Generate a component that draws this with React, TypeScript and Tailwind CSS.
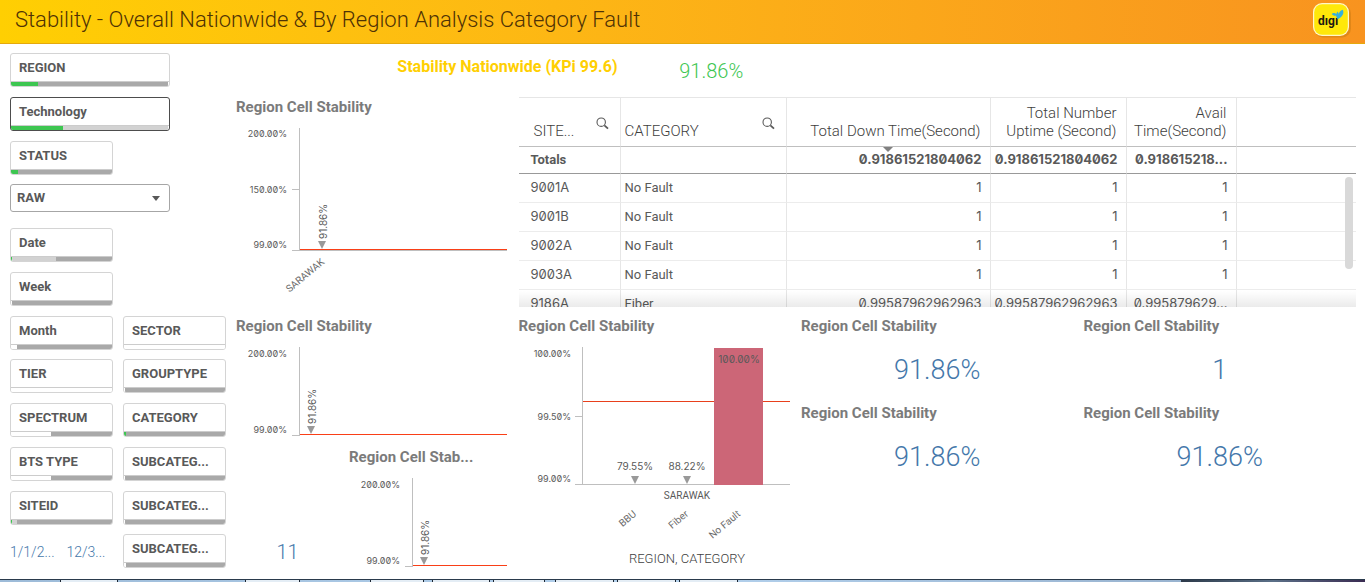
import type { ReactNode } from 'react';

interface Segment {
  color: string;
  width: number;
}

interface FilterDef {
  label: string;
  area: string;
  bar: Segment[];
  active?: boolean;
}

const GREEN = '#3dc651';
const LIGHT = '#d2d2d2';
const GREY = '#a9a9a9';
const WHITE = '#ffffff';

// bar widths are percentages: selected, alternative, possible, excluded
const filters: FilterDef[] = [
  { label: 'REGION', area: 'col-start-1 col-span-3 row-start-1', bar: [{ color: GREEN, width: 17 }, { color: GREY, width: 83 }] },
  { label: 'Technology', area: 'col-start-1 col-span-3 row-start-2', active: true, bar: [{ color: GREEN, width: 33 }, { color: LIGHT, width: 67 }] },
  { label: 'STATUS', area: 'col-start-1 col-span-2 row-start-3', bar: [{ color: GREEN, width: 7 }, { color: GREY, width: 93 }] },
  { label: 'Date', area: 'col-start-1 col-span-2 row-start-5', bar: [{ color: GREEN, width: 1 }, { color: LIGHT, width: 44 }, { color: GREY, width: 55 }] },
  { label: 'Week', area: 'col-start-1 col-span-2 row-start-6', bar: [{ color: WHITE, width: 1 }, { color: GREY, width: 99 }] },
  { label: 'Month', area: 'col-start-1 col-span-2 row-start-7', bar: [{ color: WHITE, width: 6 }, { color: GREY, width: 94 }] },
  { label: 'TIER', area: 'col-start-1 col-span-2 row-start-8', bar: [{ color: WHITE, width: 100 }] },
  { label: 'SPECTRUM', area: 'col-start-1 col-span-2 row-start-9', bar: [{ color: WHITE, width: 40 }, { color: GREY, width: 60 }] },
  { label: 'BTS TYPE', area: 'col-start-1 col-span-2 row-start-10', bar: [{ color: WHITE, width: 40 }, { color: GREY, width: 60 }] },
  { label: 'SITEID', area: 'col-start-1 col-span-2 row-start-11', bar: [{ color: GREEN, width: 1 }, { color: LIGHT, width: 5 }, { color: GREY, width: 94 }] },
  { label: 'SECTOR', area: 'col-start-3 col-span-2 row-start-7', bar: [{ color: WHITE, width: 100 }] },
  { label: 'GROUPTYPE', area: 'col-start-3 col-span-2 row-start-8', bar: [{ color: WHITE, width: 1 }, { color: GREY, width: 99 }] },
  { label: 'CATEGORY', area: 'col-start-3 col-span-2 row-start-9', bar: [{ color: GREEN, width: 2 }, { color: GREY, width: 98 }] },
  { label: 'SUBCATEG...', area: 'col-start-3 col-span-2 row-start-10', bar: [{ color: WHITE, width: 1 }, { color: GREY, width: 99 }] },
  { label: 'SUBCATEG...', area: 'col-start-3 col-span-2 row-start-11', bar: [{ color: WHITE, width: 1 }, { color: GREY, width: 99 }] },
  { label: 'SUBCATEG...', area: 'col-start-3 col-span-2 row-start-12', bar: [{ color: WHITE, width: 2 }, { color: GREY, width: 98 }] },
];

const rows = [
  ['9001A', 'No Fault', '1', '1', '1'],
  ['9001B', 'No Fault', '1', '1', '1'],
  ['9002A', 'No Fault', '1', '1', '1'],
  ['9003A', 'No Fault', '1', '1', '1'],
  ['9186A', 'Fiber', '0.99587962962963', '0.99587962962963', '0.995879629...'],
];

function Filter({ label, area, bar, active }: FilterDef) {
  return (
    <button
      type="button"
      className={`${area} flex flex-col h-[34px] overflow-hidden rounded-[3px] border bg-white text-left ${active ? 'border-[#4d4d4d]' : 'border-[#d4d4d4]'}`}
    >
      <span className="flex-1 pl-2 text-[13px] leading-[27px] font-bold text-[#595959]">{label}</span>
      <span className="flex h-[5px] w-full border-t border-[#cccccc]">
        {bar.map((s, i) => (
          <span key={i} style={{ width: `${s.width}%`, backgroundColor: s.color }} />
        ))}
      </span>
    </button>
  );
}

function Panel({ area, title = 'Region Cell Stability', children }: { area: string; title?: string; children: ReactNode }) {
  return (
    <section className={`${area} flex flex-col min-w-0`}>
      <h2 className="h-5 text-[15px] leading-5 font-bold text-[#7b7b7b] whitespace-nowrap">{title}</h2>
      {children}
    </section>
  );
}

function Kpi({ area, value }: { area: string; value: string }) {
  return (
    <Panel area={area}>
      <p className="pt-4 text-center text-[27px] leading-9 font-light text-[#4477aa]">{value}</p>
    </Panel>
  );
}

function Marker({ x, y }: { x: number; y: number }) {
  return <path d={`M${x - 4} ${y - 8}h8l-4 8z`} fill="#999999" />;
}

function AxisLabel({ x, y, children }: { x: number; y: number; children: ReactNode }) {
  return (
    <text x={x} y={y} textAnchor="end" className="fill-[#595959] text-[9px]">{children}</text>
  );
}

function LineChart({ height, ticks, markerX, category }: { height: number; ticks: [string, number][]; markerX: number; category?: string }) {
  return (
    <svg className="w-full overflow-visible pr-[2px] font-[Inter,sans-serif] slashed-zero" height={height + 20}>
      <g shapeRendering="crispEdges">
        <rect x="63" y="11" width="1" height={height - 11} fill="#bfbfbf" />
        <rect x="56" y={height - 1} width="7" height="1" fill="#bfbfbf" />
        {category && <rect x="56" y="72" width="7" height="1" fill="#bfbfbf" />}
        {category && <line x1="63" x2="100%" y1={height - 0.5} y2={height - 0.5} stroke="#bfbfbf" />}
        <line x1="64" x2="100%" y1={height - 1.5} y2={height - 1.5} stroke="#f93f17" />
      </g>
      {ticks.map(([label, y]) => <AxisLabel key={label} x={51} y={y}>{label}</AxisLabel>)}
      <Marker x={markerX} y={height - 2} />
      <text transform={`translate(${markerX + 5} ${height - 12}) rotate(-90)`} className="fill-[#595959] text-[10px]">91.86%</text>
      {category && (
        <text transform={`translate(${markerX + 3} ${height + 12}) rotate(-40)`} textAnchor="end" className="fill-[#6b6b6b] font-[Roboto,sans-serif] text-[10px]">{category}</text>
      )}
    </svg>
  );
}

function BarChart() {
  return (
    <svg className="w-full overflow-visible pr-[2px] font-[Inter,sans-serif] slashed-zero" height="240">
      <g shapeRendering="crispEdges">
        <rect x="63" y="11" width="1" height="138" fill="#bfbfbf" />
        <rect x="56" y="80" width="8" height="1" fill="#bfbfbf" />
        <line x1="56" x2="100%" y1="148.5" y2="148.5" stroke="#bfbfbf" />
        <line x1="64" x2="100%" y1="65.5" y2="65.5" stroke="#e8401c" />
        <rect x="195" y="12" width="49" height="137" fill="#cc6677" />
      </g>
      <AxisLabel x={52} y={21}>100.00%</AxisLabel>
      <AxisLabel x={52} y={84}>99.50%</AxisLabel>
      <AxisLabel x={52} y={146}>99.00%</AxisLabel>
      <g className="fill-[#595959] text-[10px]" textAnchor="middle">
        <text x="220" y="27">100.00%</text>
        <text x="116" y="134">79.55%</text>
        <text x="168" y="134">88.22%</text>
      </g>
      <Marker x={116} y={148} />
      <Marker x={168} y={148} />
      <g className="fill-[#6b6b6b] font-[Roboto,sans-serif] text-[10px]">
        <text x="168" y="163" textAnchor="middle" className="fill-[#595959]">SARAWAK</text>
        <g textAnchor="end">
          <text transform="translate(118 179) rotate(-40)">BBU</text>
          <text transform="translate(170 179) rotate(-40)">Fiber</text>
          <text transform="translate(222 179) rotate(-40)">No Fault</text>
        </g>
        <text x="168" y="227" textAnchor="middle" className="fill-[#404040] text-[13px] font-light">REGION, CATEGORY</text>
      </g>
    </svg>
  );
}

function SearchIcon() {
  return (
    <svg className="shrink-0" width="13" height="13" viewBox="0 0 13 13" fill="none" stroke="#595959" aria-hidden="true">
      <circle cx="5.2" cy="5.2" r="4.2" strokeWidth="1.1" />
      <path d="M8.4 8.4 12 11.6" strokeWidth="1.8" />
    </svg>
  );
}

function DigiLogo() {
  return (
    <svg width="38" height="36" viewBox="0 0 38 36" role="img" aria-label="digi">
      <rect x="1" y="2.5" width="37" height="33" rx="9" fill="#c97a12" opacity="0.5" />
      <rect x="0" y="1" width="36" height="33" rx="9" fill="#fff7c8" />
      <rect x="1.2" y="2.2" width="33.6" height="30.6" rx="8" fill="#ffe80a" />
      <text x="5" y="23" className="fill-[#1c1a12] font-[Roboto,sans-serif] text-[12px] font-bold">dıgı</text>
      <g fill="#35b1dd">
        <path d="M25 17.500c-2.400-2.600-2.600-5.600-.4-8.100 1.700 2.300 1.900 5.200.4 8.100z" />
        <path d="M25.200 17c-.4-4.200.8-8 4.600-9.200 1.700 3.400-.6 7.200-4.600 9.200z" />
        <path d="M24.500 13c-2.300-2.200-4.600-2.400-5.700-1.100 1.200 1.900 3.700 2.200 5.700 1.100z" />
      </g>
    </svg>
  );
}

function StabilityTable() {
  const num = 'font-[Inter,sans-serif] slashed-zero text-[13px]';
  return (
    <div className="relative col-start-10 col-span-15 row-start-2 row-span-5 h-[210px] overflow-hidden border-t border-[#e6e6e6]">
      <table className="w-full table-fixed border-separate border-spacing-0 text-[13px] text-[#595959]">
        <colgroup>
          <col className="w-[102px]" />
          <col className="w-[166px]" />
          <col className="w-[204px]" />
          <col className="w-[136px]" />
          <col className="w-[110px]" />
          <col />
        </colgroup>
        <thead className="text-[15px] leading-[18px] text-[#404040]">
          <tr className="h-[49px] align-bottom *:border-b *:border-[#bfbfbf] *:pb-[6px] *:font-light">
            <th className="border-r border-r-[#e6e6e6]! pl-[15px] pr-[11px] text-left">
              <span className="flex items-end justify-between"><span>SITE...</span><button type="button" aria-label="Search SITEID" className="pb-[10px]"><SearchIcon /></button></span>
            </th>
            <th className="border-r border-r-[#e6e6e6]! pl-1 pr-[11px] text-left">
              <span className="flex items-end justify-between"><span>CATEGORY</span><button type="button" aria-label="Search CATEGORY" className="pb-[10px]"><SearchIcon /></button></span>
            </th>
            <th className="relative border-r border-r-[#e6e6e6]! pr-[9px] text-right">
              Total Down Time(Second)
              <span className="absolute -bottom-[6px] left-1/2 -translate-x-1/2 border-x-[5px] border-t-[5px] border-x-transparent border-t-[#808080]" />
            </th>
            <th className="border-r border-r-[#e6e6e6]! pr-[9px] text-right">Total Number<br />Uptime (Second)</th>
            <th className="border-r border-r-[#e6e6e6]! pr-[9px] text-right">Avail<br />Time(Second)</th>
            <th />
          </tr>
        </thead>
        <tbody>
          <tr className="h-[27px] font-bold *:border-b *:border-[#999999]">
            <td className="border-r border-r-[#e6e6e6]! pl-3">Totals</td>
            <td className="border-r border-r-[#e6e6e6]!" />
            <td className={`${num} border-r border-r-[#e6e6e6]! pr-2 text-right`}>0.91861521804062</td>
            <td className={`${num} border-r border-r-[#e6e6e6]! pr-2 text-right`}>0.91861521804062</td>
            <td className={`${num} border-r border-r-[#e6e6e6]! pr-2 text-right`}>0.918615218...</td>
            <td />
          </tr>
          {rows.map(r => (
            <tr key={r[0]} className="h-[29px] *:border-b *:border-[#ececec]">
              <td className={`${num} border-r border-r-[#e6e6e6]! pl-3`}>{r[0]}</td>
              <td className="border-r border-r-[#e6e6e6]! pl-1">{r[1]}</td>
              <td className={`${num} border-r border-r-[#e6e6e6]! pr-2 text-right`}>{r[2]}</td>
              <td className={`${num} border-r border-r-[#e6e6e6]! pr-2 text-right`}>{r[3]}</td>
              <td className={`${num} border-r border-r-[#e6e6e6]! pr-2 text-right`}>{r[4]}</td>
              <td />
            </tr>
          ))}
        </tbody>
      </table>
      <div className="absolute inset-x-0 bottom-0 h-4 bg-linear-to-b from-transparent to-black/8" />
      <div className="absolute right-[3px] top-[79px] h-[92px] w-2 rounded-full bg-[#d9d9d9]" />
    </div>
  );
}

export default function App() {
  return (
    <div className="flex h-screen flex-col overflow-hidden bg-white font-[Roboto,sans-serif]">
      <header className="flex h-11 shrink-0 items-center justify-between border-b border-[#e5a90c] bg-linear-to-r from-[#ffcf02] to-[#f8931f] pb-[3px] pl-[15px] pr-[14px]">
        <h1 className="text-[22px] leading-7 font-light text-[#4f3205]">Stability - Overall Nationwide &amp; By Region Analysis Category Fault</h1>
        <DigiLogo />
      </header>

      <main className="grid min-h-0 flex-1 grid-cols-[repeat(24,minmax(0,1fr))] grid-rows-[repeat(12,minmax(0,1fr))] gap-x-[10px] pb-px pl-[10px] pr-[9px] pt-[9px]">
        {filters.map((f, i) => <Filter key={i} {...f} />)}

        <div className="relative col-start-1 col-span-3 row-start-4 h-7">
          <select aria-label="Value type" defaultValue="RAW" className="h-7 w-full appearance-none rounded-[3px] border border-[#a6a6a6] bg-white pb-px pl-[6px] text-[13px] font-bold text-[#595959]">
            <option>RAW</option>
          </select>
          <span className="pointer-events-none absolute right-[10px] top-3 border-x-4 border-t-[5px] border-x-transparent border-t-[#595959]" />
        </div>

        <p className="col-start-1 row-start-12 pt-2 text-[14px] leading-5 font-light text-[#4477aa]">1/1/2...</p>
        <p className="col-start-2 row-start-12 pt-2 text-[14px] leading-5 font-light text-[#4477aa]">12/3...</p>

        <h2 className="col-start-7 col-span-5 row-start-1 whitespace-nowrap pr-1 pt-1 text-right text-[16px] leading-5 font-bold text-[#ffcf02]">Stability Nationwide (KPi 99.6)</h2>
        <p className="col-start-12 col-span-3 row-start-1 pt-1 text-center text-[20px] leading-7 font-light text-[#3dc651]">91.86%</p>

        <Panel area="col-start-5 col-span-5 row-start-2 row-span-5">
          <LineChart height={134} ticks={[['200.00%', 20], ['150.00%', 76], ['99.00%', 131]]} markerX={86} category="SARAWAK" />
        </Panel>
        <StabilityTable />

        <Panel area="col-start-5 col-span-5 row-start-7 row-span-3">
          <LineChart height={100} ticks={[['200.00%', 21], ['99.00%', 97]]} markerX={75} />
        </Panel>
        <Panel area="col-start-7 col-span-3 row-start-10 row-span-3" title="Region Cell Stab...">
          <LineChart height={100} ticks={[['200.00%', 21], ['99.00%', 97]]} markerX={75} />
        </Panel>
        <p className="col-start-5 col-span-2 row-start-12 pt-1 text-center text-[20px] leading-7 font-light text-[#4477aa]">11</p>

        <Panel area="col-start-10 col-span-5 row-start-7 row-span-6"><BarChart /></Panel>

        <Kpi area="col-start-15 col-span-5 row-start-7 row-span-2" value="91.86%" />
        <Kpi area="col-start-20 col-span-5 row-start-7 row-span-2" value="1" />
        <Kpi area="col-start-15 col-span-5 row-start-9 row-span-2" value="91.86%" />
        <Kpi area="col-start-20 col-span-5 row-start-9 row-span-2" value="91.86%" />
      </main>

      {/* top edge of the taskbar with its window buttons */}
      <footer className="flex h-[3px] shrink-0 border-t border-[#2a3a4c] bg-linear-to-r from-[#9dbbd8] via-[#b4d2ee] to-[#8fa8c4] *:border-x *:border-[#1c2733] *:bg-[#e4edf5]">
        <span className="ml-[60px] w-[58px]" />
        <span className="ml-[127px] w-[55px]" />
        <span className="ml-[70px] w-[54px]" />
        <span className="ml-[8px] w-[58px]" />
        <span className="ml-[3px] w-[52px]" />
        <span className="ml-[10px] w-[59px]" />
        <span className="ml-[3px] w-[59px]" />
        <span className="ml-[3px] w-[59px]" />
        <span className="ml-auto w-[184px] border-0! bg-linear-to-r from-[#2d3a4a] via-[#5b7088] to-[#3a2c52]" />
      </footer>
    </div>
  );
}
